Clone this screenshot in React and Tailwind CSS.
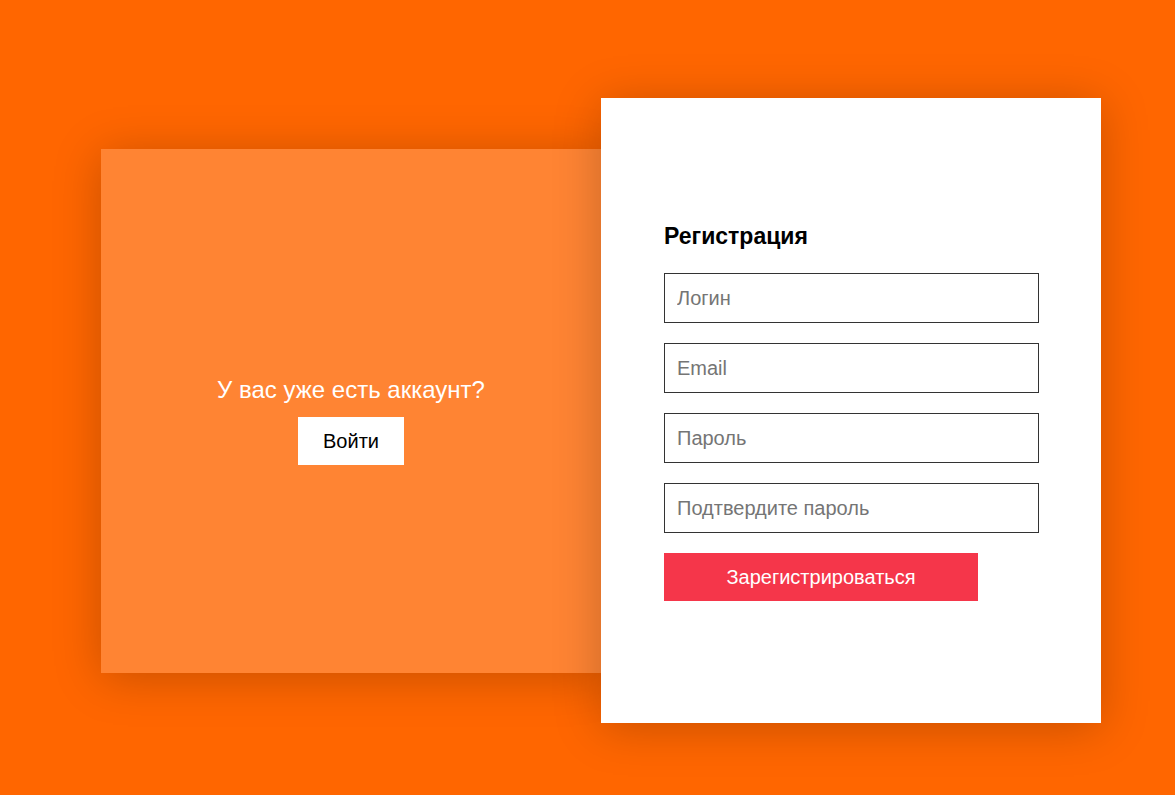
import React from 'react';

const fields = ['Логин', 'Email', 'Пароль', 'Подтвердите пароль'];

const App = () => {
    return (
        <div className="min-h-screen bg-[#ff6600] pl-[101px] pt-[98px] font-['Liberation_Sans',Arial,sans-serif]">
            <div className="flex items-center w-[1000px]">
                {/* Sign-in side */}
                <div className="w-[500px] h-[524px] bg-white/20 shadow-[0_5px_45px_rgba(0,0,0,0.22)] flex flex-col items-center justify-center">
                    <div className="mt-[20px] flex flex-col items-center">
                        <p className="text-white text-[24px] leading-[28px] mb-[13px]">У вас уже есть аккаунт?</p>
                        <button className="bg-white text-black text-[20px] w-[106px] h-[48px]">Войти</button>
                    </div>
                </div>

                {/* Register form */}
                <div className="relative z-10 w-[500px] h-[625px] bg-white shadow-[0_5px_45px_rgba(0,0,0,0.22)] px-[63px] pt-[124px]">
                    <h2 className="text-[23px] font-bold text-black leading-[28px] mb-[23px]">Регистрация</h2>
                    <form className="flex flex-col gap-[20px]">
                        {fields.map((f) => (
                            <input
                                key={f}
                                type={f.includes('ароль') ? 'password' : 'text'}
                                placeholder={f}
                                className="w-[375px] h-[50px] border border-[#333] px-[12px] text-[20px] text-black placeholder:text-[#757575] outline-none"
                            />
                        ))}
                        <button type="button" className="w-[314px] h-[48px] bg-[#f5364a] text-white text-[20px]">
                            Зарегистрироваться
                        </button>
                    </form>
                </div>
            </div>
        </div>
    );
};

export default App;
